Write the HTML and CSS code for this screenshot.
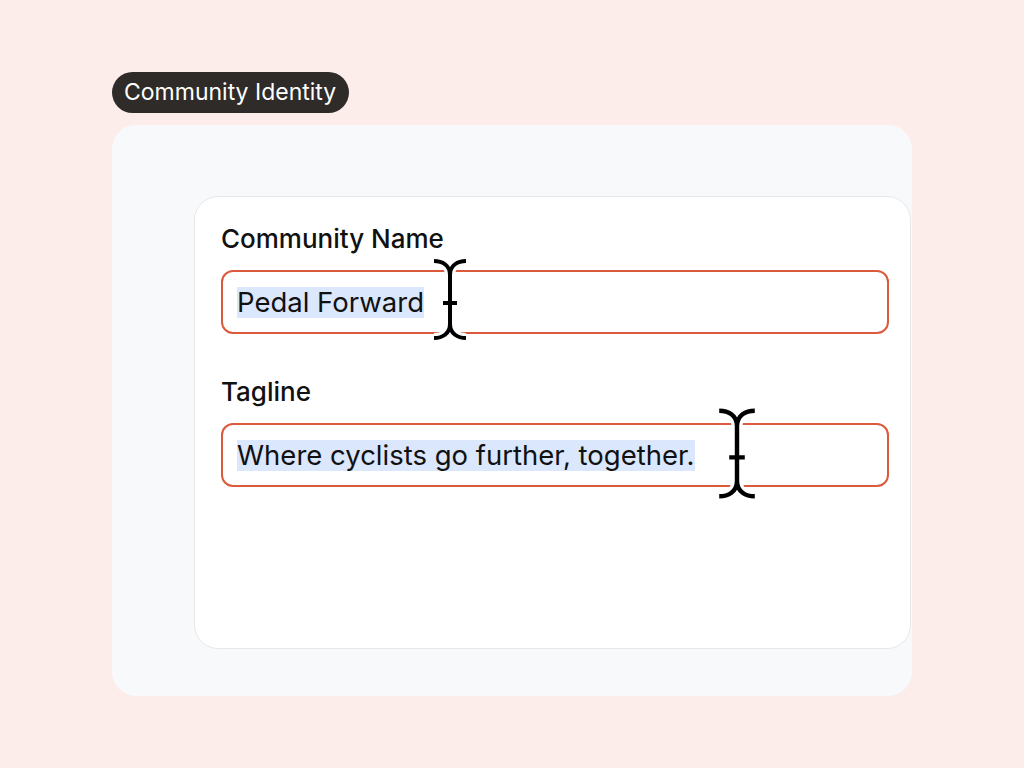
FILE: index.html
```html
<!DOCTYPE html>
<html lang="en">
<head>
    <meta charset="UTF-8">
    <meta name="viewport" content="width=device-width, initial-scale=1.0">
    <title>Community Identity</title>
    <link rel="stylesheet" href="styles.css">
</head>
<body>

    <div class="page">
        <span class="badge">Community Identity</span>

        <div class="panel">
            <div class="card">

                <div class="field">
                    <label class="field-label">Community Name</label>
                    <div class="input">
                        <span class="selected">Pedal Forward</span>
                        <svg class="cursor cursor-name" viewBox="0 0 36 81">
                            <g class="cursor-outline">
                                <path d="M2 2 C10 2 18 6 18 16 M34 2 C26 2 18 6 18 16 V65 C18 75 10 79 2 79 M18 65 C18 75 26 79 34 79 M11 44 H25"/>
                            </g>
                            <g class="cursor-stroke">
                                <path d="M2 2 C10 2 18 6 18 16 M34 2 C26 2 18 6 18 16 V65 C18 75 10 79 2 79 M18 65 C18 75 26 79 34 79 M11 44 H25"/>
                            </g>
                        </svg>
                    </div>
                </div>

                <div class="field">
                    <label class="field-label">Tagline</label>
                    <div class="input">
                        <span class="selected">Where cyclists go further, together.</span>
                        <svg class="cursor cursor-tagline" viewBox="0 0 36 81">
                            <g class="cursor-outline">
                                <path d="M2 2 C10 2 18 6 18 16 M34 2 C26 2 18 6 18 16 V65 C18 75 10 79 2 79 M18 65 C18 75 26 79 34 79 M11 44 H25"/>
                            </g>
                            <g class="cursor-stroke">
                                <path d="M2 2 C10 2 18 6 18 16 M34 2 C26 2 18 6 18 16 V65 C18 75 10 79 2 79 M18 65 C18 75 26 79 34 79 M11 44 H25"/>
                            </g>
                        </svg>
                    </div>
                </div>

            </div>
        </div>
    </div>

</body>
</html>
```

FILE: styles.css
```css
/* General Styles */
body {
    font-family: Inter, "Noto Sans", sans-serif;
    background-color: #fcecea;
    color: #111;
    margin: 0;
    padding: 0;
}

.page {
    padding: 72px 0 0 112px;
    display: flex;
    flex-direction: column;
    align-items: flex-start;
}

.badge {
    background-color: #2e2b29;
    color: #fff;
    font-size: 23px;
    line-height: 41px;
    height: 41px;
    padding: 0 13px 0 12px;
    border-radius: 21px;
}

.panel {
    margin-top: 12px;
    width: 800px;
    height: 571px;
    box-sizing: border-box;
    padding: 71px 0 0 82px;
    background-color: #f8f9fa;
    border-radius: 24px;
    overflow: hidden;
}

.card {
    width: 717px;
    height: 453px;
    box-sizing: border-box;
    padding: 27px 21px 0 26px;
    background: #fff;
    border: 1px solid #e5e7ea;
    border-radius: 24px;
    display: flex;
    flex-direction: column;
    gap: 43px;
}

.field {
    display: flex;
    flex-direction: column;
    gap: 16px;
}

.field-label {
    font-size: 26px;
    font-weight: 500;
    line-height: 30px;
    color: #111;
}

.input {
    position: relative;
    height: 64px;
    box-sizing: border-box;
    border: 2px solid #dc5a3c;
    border-radius: 12px;
    padding: 0 14px;
    display: flex;
    align-items: center;
}

.selected {
    background-color: #dbe7fd;
    font-size: 27.5px;
    line-height: 31px;
    color: #111;
}

/* I-beam cursor over the input */
.cursor {
    position: absolute;
    overflow: visible;
}
.cursor path {
    fill: none;
    stroke-linecap: butt;
}
.cursor-outline path {
    stroke: #fff;
    stroke-width: 10;
}
.cursor-stroke path {
    stroke: #000;
    stroke-width: 4;
}
.cursor-name {
    left: 209px;
    top: -13px;
    width: 36px;
    height: 81px;
}
.cursor-tagline {
    left: 494px;
    top: -17px;
    width: 40px;
    height: 91px;
}
```
